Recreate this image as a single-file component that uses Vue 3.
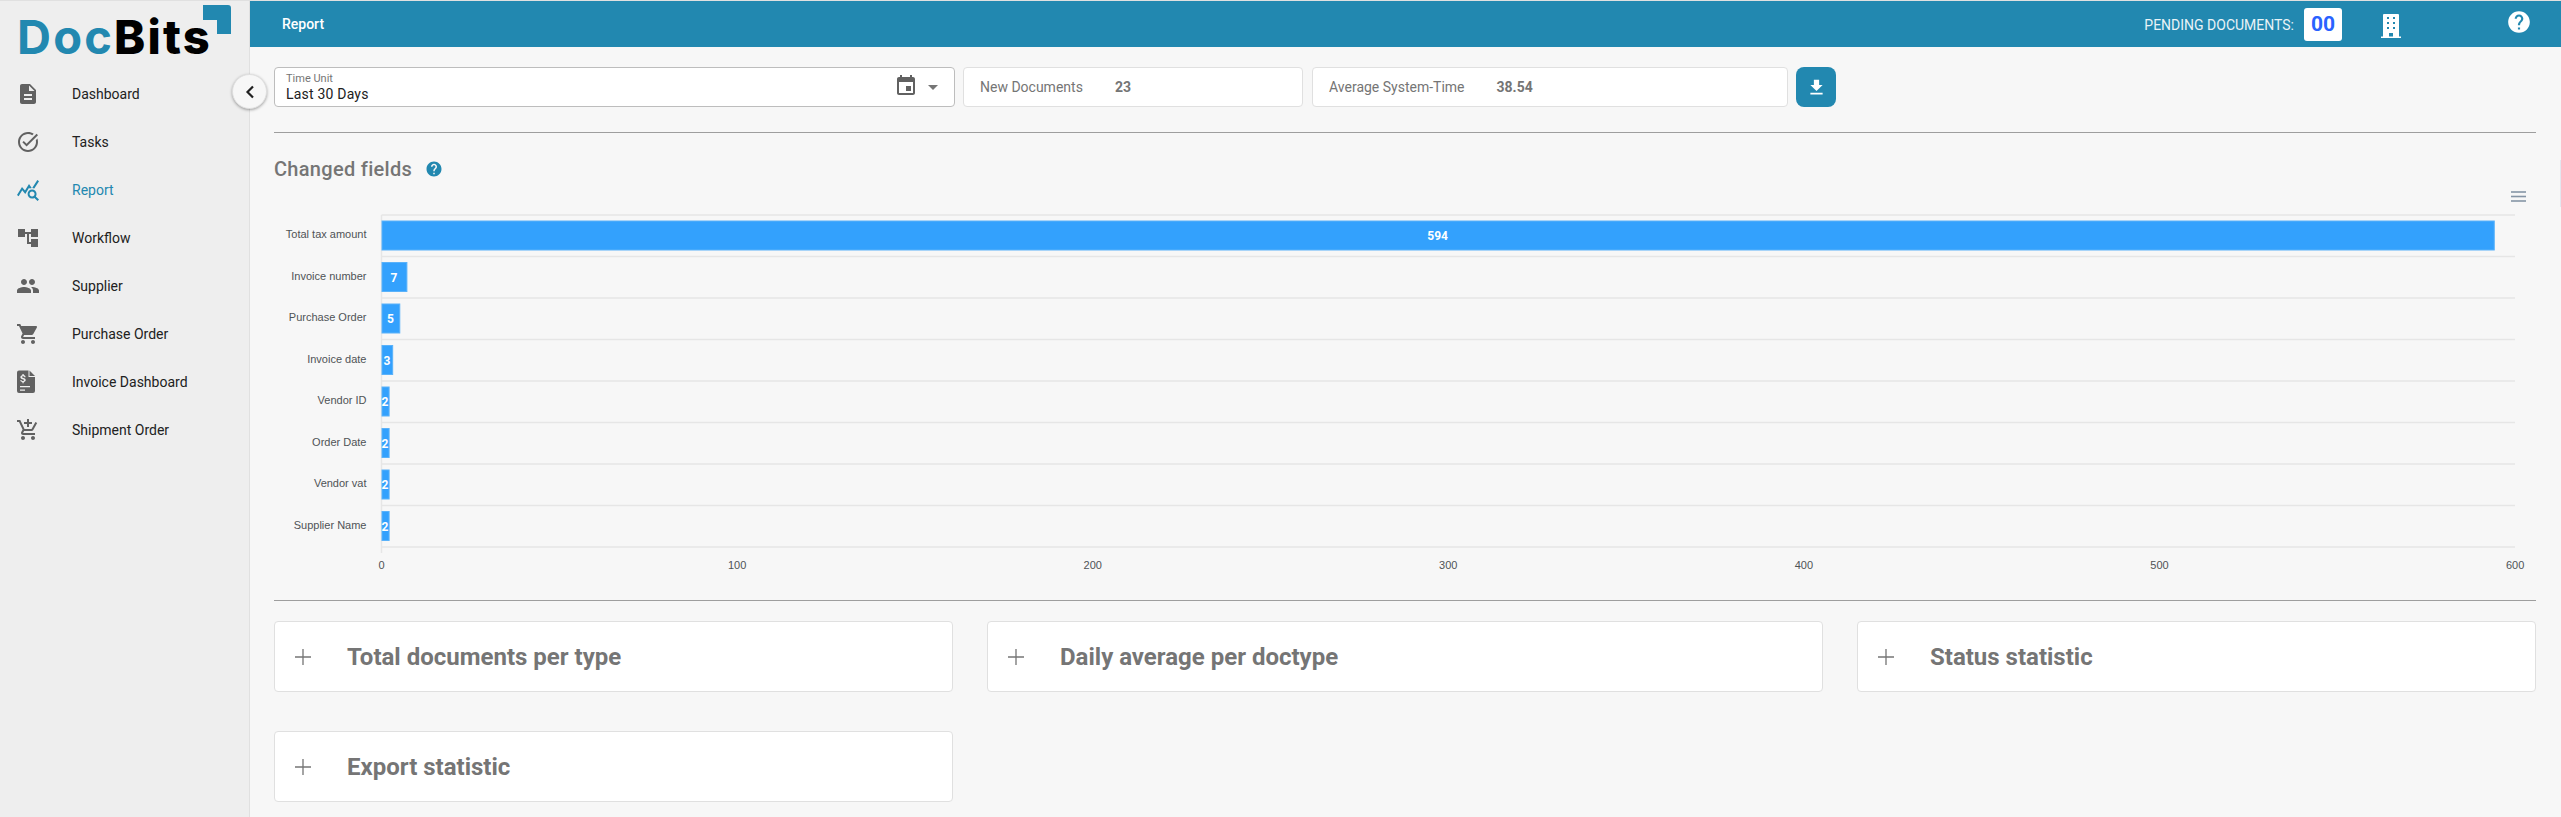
<script setup>
import { computed } from 'vue';

const navItems = [
    { label: 'Dashboard', d: 'M14 2H6c-1.1 0-1.99.9-1.99 2L4 20c0 1.1.89 2 1.99 2H18c1.1 0 2-.9 2-2V8l-6-6zm2 16H8v-2h8v2zm0-4H8v-2h8v2zm-3-5V3.5L18.5 9H13z' },
    { label: 'Tasks', d: 'M22,5.18L10.59,16.6l-4.24-4.24l1.41-1.41l2.83,2.83l10-10L22,5.18z M19.79,10.22C19.92,10.79,20,11.39,20,12c0,4.42-3.58,8-8,8s-8-3.58-8-8c0-4.42,3.58-8,8-8c1.58,0,3.04,0.46,4.28,1.25l1.44-1.44C16.1,2.67,14.13,2,12,2C6.48,2,2,6.48,2,12c0,5.52,4.48,10,10,10s10-4.48,10-10c0-1.19-0.22-2.33-0.6-3.39L19.79,10.22z' },
    { label: 'Report', active: true, d: 'M19.88,18.47c0.44-0.7,0.7-1.51,0.7-2.39c0-2.49-2.01-4.5-4.5-4.5s-4.5,2.01-4.5,4.5s2.01,4.5,4.49,4.5c0.88,0,1.7-0.26,2.39-0.7L21.58,23L23,21.58L19.88,18.47z M16.08,18.58c-1.38,0-2.5-1.12-2.5-2.5c0-1.38,1.12-2.5,2.5-2.5s2.5,1.12,2.5,2.5C18.58,17.46,17.46,18.58,16.08,18.58z M15.72,10.08c-0.74,0.02-1.45,0.18-2.1,0.45l-0.55-0.83l-3.8,6.18l-3.01-3.52l-3.63,5.81L1,17l5-8l3,3.5L13,6L15.72,10.08z M18.31,10.58c-0.64-0.28-1.33-0.45-2.05-0.49c0,0,5.11-8.09,5.11-8.09L23,3.18L18.31,10.58z' },
    { label: 'Workflow', d: 'M22 11V3h-7v3H9V3H2v8h7V8h2v10h4v3h7v-8h-7v3h-2V8h2v3z' },
    { label: 'Supplier', d: 'M16 11c1.66 0 2.99-1.34 2.99-3S17.66 5 16 5c-1.66 0-3 1.34-3 3s1.34 3 3 3zm-8 0c1.66 0 2.99-1.34 2.99-3S9.66 5 8 5C6.34 5 5 6.34 5 8s1.34 3 3 3zm0 2c-2.33 0-7 1.17-7 3.5V19h14v-2.5c0-2.33-4.67-3.5-7-3.5zm8 0c-.29 0-.62.02-.97.05 1.16.84 1.97 1.97 1.97 3.45V19h6v-2.5c0-2.33-4.67-3.5-7-3.5z' },
    { label: 'Purchase Order', d: 'M7 18c-1.1 0-1.99.9-1.99 2S5.9 22 7 22s2-.9 2-2-.9-2-2-2zM1 2v2h2l3.6 7.59-1.35 2.45c-.16.28-.25.61-.25.96 0 1.1.9 2 2 2h12v-2H7.42c-.14 0-.25-.11-.25-.25l.03-.12.9-1.63h7.45c.75 0 1.41-.41 1.75-1.03l3.58-6.49c.08-.14.12-.31.12-.48 0-.55-.45-1-1-1H5.21l-.94-2H1zm16 16c-1.1 0-1.99.9-1.99 2s.89 2 1.99 2 2-.9 2-2-.9-2-2-2z' },
    { label: 'Invoice Dashboard', d: 'M3 .5h9.500v6.500H19V21a2 2 0 0 1-2 2H3a2 2 0 0 1-2-2V2.500a2 2 0 0 1 2-2zM13.500.5l5.500 5.500h-5.500zM4 16v1.200h10V16zm0 3.500v1.200h5v-1.200zM6.400 4v1.200c-1.300.2-2 1-2 2 0 1.200 1 1.700 2.200 2 1 .3 1.500.5 1.500 1 0 .5-.6.8-1.300.8-.8 0-1.300-.3-1.400-1H4.300c.1 1.200.9 1.900 2.100 2.100v1.200h1.300v-1.200c1.300-.2 2-1 2-2 0-1.300-1-1.800-2.200-2.100-1-.3-1.500-.5-1.500-1 0-.4.5-.7 1.200-.7s1.100.3 1.200.9h1.200c-.1-1.200-.8-1.900-1.900-2.100V4z' },
    { label: 'Shipment Order', d: 'M11 9h2V6h3V4h-3V1h-2v3H8v2h3v3zm-4 9c-1.1 0-1.99.9-1.99 2S5.9 22 7 22s2-.9 2-2-.9-2-2-2zm10 0c-1.1 0-1.99.9-1.99 2s.89 2 1.99 2 2-.9 2-2-.9-2-2-2zm-9.83-3.25l.03-.12.9-1.63h7.45c.75 0 1.41-.41 1.75-1.03l3.86-7.01L19.42 4h-.01l-1.1 2-2.76 5H8.53l-.13-.27L6.16 6l-.95-2-.94-2H1v2h2l3.6 7.59-1.35 2.45c-.16.28-.25.61-.25.96 0 1.1.9 2 2 2h12v-2H7.42c-.13 0-.25-.11-.25-.25z' },
];

const helpIcon = 'M12 2C6.48 2 2 6.48 2 12s4.48 10 10 10 10-4.48 10-10S17.52 2 12 2zm1 17h-2v-2h2v2zm2.07-7.75l-.9.92C13.45 12.9 13 13.5 13 15h-2v-.5c0-1.1.45-2.1 1.17-2.83l1.24-1.26c.37-.36.59-.86.59-1.41 0-1.1-.9-2-2-2s-2 .9-2 2H8c0-2.21 1.79-4 4-4s4 1.79 4 4c0 .88-.36 1.68-.93 2.25z';

const fields = [
    { name: 'Total tax amount', value: 594 },
    { name: 'Invoice number', value: 7 },
    { name: 'Purchase Order', value: 5 },
    { name: 'Invoice date', value: 3 },
    { name: 'Vendor ID', value: 2 },
    { name: 'Order Date', value: 2 },
    { name: 'Vendor vat', value: 2 },
    { name: 'Supplier Name', value: 2 },
];

// chart geometry, relative to the svg box
const plotLeft = 107.5;
const plotTop = 34;
const rowHeight = 41.5;
const unit = 3.556;
const ticks = [0, 100, 200, 300, 400, 500, 600];

const rows = computed(() => fields.map((f, i) => {
    const width = f.value * unit;
    const rowTop = plotTop + i * rowHeight;
    return {
        ...f,
        width,
        barY: rowTop + 6,
        labelY: rowTop + 23,
        valueY: rowTop + 25,
        valueX: plotLeft + width / 2,
    };
}));

const gridLines = computed(() => fields.map((f, i) => plotTop + (i + 1) * rowHeight));

const panels = ['Total documents per type', 'Daily average per doctype', 'Status statistic', 'Export statistic'];
</script>

<template>
    <div class="app-shell">
        <aside class="sidebar">
            <div class="logo">
                <span class="logo-doc">Doc</span><span class="logo-bits">Bits</span>
                <svg class="logo-corner" width="28" height="29" viewBox="0 0 28 29">
                    <path d="M0 0h25a3 3 0 0 1 3 3v26H14V15H0z" fill="#2288b0" />
                </svg>
            </div>
            <nav class="nav">
                <div v-for="item in navItems" :key="item.label" class="nav-item" :class="{ active: item.active }">
                    <svg class="nav-icon" width="24" height="24" viewBox="0 0 24 24">
                        <path :d="item.d" fill-rule="evenodd" />
                    </svg>
                    <span>{{ item.label }}</span>
                </div>
            </nav>
            <button class="collapse-btn">
                <svg width="12" height="14" viewBox="0 0 12 14">
                    <path d="M9 1.500 3.500 7 9 12.500" fill="none" stroke="#212121" stroke-width="2.200" />
                </svg>
            </button>
        </aside>

        <main class="main">
            <header class="topbar">
                <span class="topbar-title">Report</span>
                <span class="pending-label">PENDING DOCUMENTS:</span>
                <span class="pending-count">00</span>
                <svg class="building" width="20" height="24" viewBox="0 0 20 24">
                    <path fill="#fff" fill-rule="evenodd" d="M2 1a1 1 0 0 1 1-1h14a1 1 0 0 1 1 1v21.500h2V24H0v-1.500h2zM6 3v2h2V3zm6 0v2h2V3zM6 8v2h2V8zm6 0v2h2V8zM6 13v2h2v-2zm6 0v2h2v-2zM8 19v3.500h4V19z" />
                </svg>
                <svg class="help" width="26" height="26" viewBox="0 0 24 24">
                    <path :d="helpIcon" fill="#fff" />
                </svg>
            </header>

            <div class="content">
                <section class="filters">
                    <div class="box select">
                        <div class="select-text">
                            <span class="select-label">Time Unit</span>
                            <span class="select-value">Last 30 Days</span>
                        </div>
                        <svg width="24" height="24" viewBox="0 0 24 24" class="calendar">
                            <path fill="#616161" d="M17 12h-5v5h5v-5zM16 1v2H8V1H6v2H5c-1.11 0-1.990.9-1.990 2L3 19c0 1.100.89 2 2 2h14c1.100 0 2-.9 2-2V5c0-1.100-.9-2-2-2h-1V1h-2zm3 18H5V8h14v11z" />
                        </svg>
                        <span class="caret"></span>
                    </div>
                    <div class="box stat stat-docs">
                        <span class="stat-label">New Documents</span>
                        <span class="stat-value">23</span>
                    </div>
                    <div class="box stat stat-time">
                        <span class="stat-label">Average System-Time</span>
                        <span class="stat-value">38.54</span>
                    </div>
                    <button class="download">
                        <svg width="21" height="21" viewBox="0 0 24 24">
                            <path fill="#fff" d="M19 9h-4V3H9v6H5l7 7 7-7zM5 18v2h14v-2H5z" />
                        </svg>
                    </button>
                </section>

                <hr class="divider" />

                <h2 class="chart-title">
                    Changed fields
                    <svg width="18" height="18" viewBox="0 0 24 24">
                        <path :d="helpIcon" fill="#2288b0" />
                    </svg>
                </h2>

                <svg class="chart" width="2262" height="419" viewBox="0 0 2262 419">
                    <g stroke="#8595a5" stroke-width="1.600">
                        <line x1="2237" x2="2252" y1="11" y2="11" />
                        <line x1="2237" x2="2252" y1="15.500" y2="15.500" />
                        <line x1="2237" x2="2252" y1="20" y2="20" />
                    </g>
                    <line :x1="plotLeft" :x2="2241" :y1="plotTop" :y2="plotTop" class="grid" />
                    <line v-for="y in gridLines" :key="y" :x1="plotLeft" :x2="2241" :y1="y" :y2="y" class="grid" />
                    <line :x1="plotLeft" :x2="plotLeft" :y1="plotTop" y2="372" class="grid" />

                    <g v-for="row in rows" :key="row.name">
                        <text class="y-label" x="92.500" :y="row.labelY">{{ row.name }}</text>
                        <rect class="bar" :x="plotLeft + 0.500" :y="row.barY" :width="row.width" height="29" />
                        <text class="bar-value" :x="row.valueX" :y="row.valueY">{{ row.value }}</text>
                    </g>

                    <text v-for="t in ticks" :key="t" class="x-label" :x="plotLeft + t * unit" y="388">{{ t }}</text>
                </svg>

                <hr class="divider" />

                <section class="panels">
                    <div v-for="p in panels" :key="p" class="box panel">
                        <svg width="16" height="16" viewBox="0 0 16 16">
                            <path d="M8 0v16M0 8h16" stroke="#757575" stroke-width="1.300" />
                        </svg>
                        <span class="panel-title">{{ p }}</span>
                    </div>
                </section>
            </div>
        </main>

        <span class="scroll-thumb"></span>
    </div>
</template>

<style>
html,
body {
    margin: 0;
    height: 100%;
    overflow: hidden;
    background: #f7f7f7;
}
</style>

<style scoped>
.app-shell {
    position: relative;
    display: flex;
    height: 817px;
    border-top: 1px solid #e0e0e0;
    box-sizing: border-box;
    font-family: Roboto, "Liberation Sans", sans-serif;
    background: #f7f7f7;
}

/* sliver of the chart scrollbar on the window edge */
.scroll-thumb {
    position: absolute;
    right: 0;
    top: 159px;
    width: 1px;
    height: 47px;
    background: #e3e8f0;
}

/* --- Sidebar --- */
.sidebar {
    position: relative;
    width: 250px;
    flex: none;
    box-sizing: border-box;
    background: #eeeeee;
    border-right: 1px solid #e0e0e0;
}

.logo {
    position: relative;
    height: 69px;
    box-sizing: border-box;
    padding: 8px 0 0 17px;
    font-family: Inter, sans-serif;
    font-size: 47px;
    font-weight: 700;
    line-height: 56px;
    letter-spacing: 2.2px;
}

.logo-doc {
    color: #2288b0;
}

.logo-bits {
    color: #000;
    font-weight: 800;
}

.logo-corner {
    position: absolute;
    left: 203px;
    top: 4px;
}

.nav-item {
    display: flex;
    align-items: center;
    gap: 32px;
    height: 48px;
    padding-left: 16px;
    font-size: 14px;
    color: #212121;
}

.nav-icon {
    fill: #616161;
    flex: none;
}

.nav-item.active {
    color: #2288b0;
}

.nav-item.active .nav-icon {
    fill: #2288b0;
}

.collapse-btn {
    position: absolute;
    left: 232px;
    top: 73px;
    width: 35px;
    height: 35px;
    padding: 0;
    display: flex;
    align-items: center;
    justify-content: center;
    border: 1px solid #e0e0e0;
    border-radius: 50%;
    background: #f7f7f7;
    box-shadow: 0 1px 3px rgba(0, 0, 0, 0.35);
    z-index: 2;
}

/* --- Top bar --- */
.main {
    flex: 1;
    min-width: 0;
}

.topbar {
    display: flex;
    align-items: center;
    height: 46px;
    padding-left: 32px;
    background: #2288b0;
    color: #fff;
}

.topbar-title {
    font-size: 14px;
    font-weight: 500;
    margin-right: auto;
}

.pending-label {
    font-size: 14px;
    color: #e9f3f7;
    margin-top: 1px;
}

.pending-count {
    width: 38px;
    height: 33px;
    margin: 0 39px 0 10px;
    border-radius: 3px;
    background: #fff;
    color: #2962ff;
    font-size: 21px;
    font-weight: 700;
    line-height: 32px;
    text-align: center;
}

.building {
    margin-top: 3px;
}

.help {
    margin: -4px 29px 0 105px;
}

/* --- Filters --- */
.content {
    padding: 20px 25px 0 24px;
}

.box {
    box-sizing: border-box;
    background: #fff;
    border: 1px solid #e0e0e0;
    border-radius: 4px;
}

.filters {
    display: flex;
    gap: 9px;
    height: 40px;
}

.select {
    display: flex;
    align-items: center;
    width: 681px;
    margin-right: -1px;
    padding: 0 16px 0 11px;
    border-color: #bdbdbd;
}

.select-text {
    flex: 1;
    display: flex;
    flex-direction: column;
    margin-top: 1px;
}

.select-label {
    font-size: 11px;
    line-height: 14px;
    color: #757575;
}

.select-value {
    font-size: 14px;
    line-height: 17px;
    letter-spacing: 0.2px;
    color: #212121;
}

.calendar {
    margin-right: 10px;
    margin-top: -3px;
}

.caret {
    width: 0;
    height: 0;
    border-left: 5px solid transparent;
    border-right: 5px solid transparent;
    border-top: 5px solid #757575;
}

.stat {
    display: flex;
    align-items: center;
    gap: 32px;
    padding-left: 16px;
    font-size: 14px;
    color: #757575;
}

.stat-docs {
    width: 340px;
}

.stat-time {
    width: 476px;
}

.stat-value {
    font-weight: 700;
}

.download {
    width: 40px;
    height: 40px;
    margin-left: -1px;
    padding: 0;
    display: flex;
    align-items: center;
    justify-content: center;
    border: none;
    border-radius: 8px;
    background: #2288b0;
}

.divider {
    height: 1px;
    margin: 25px 0 0;
    border: none;
    background: #9e9e9e;
}

/* --- Chart --- */
.chart-title {
    display: flex;
    align-items: center;
    gap: 13px;
    height: 24px;
    margin: 24px 0 0;
    font-size: 20px;
    font-weight: 500;
    letter-spacing: 0.3px;
    color: #757575;
}

.chart {
    display: block;
}

.chart + .divider {
    margin-top: 0;
}

.grid {
    stroke: #e6e6e6;
    stroke-width: 1.500;
}

.y-label,
.x-label {
    font-family: "Liberation Sans", Arial, sans-serif;
    font-size: 11px;
    fill: #4f5356;
}

.y-label {
    text-anchor: end;
}

.x-label {
    text-anchor: middle;
}

.bar {
    fill: #33a1fd;
    stroke: #5ab2fa;
    stroke-width: 1;
}

.bar-value {
    font-family: Roboto, sans-serif;
    font-size: 12px;
    font-weight: 700;
    fill: #fff;
    text-anchor: middle;
}

/* --- Collapsed panels --- */
.panels {
    display: grid;
    grid-template-columns: 679px 836px 1fr;
    gap: 39px 34px;
    margin-top: 20px;
}

.panel {
    display: flex;
    align-items: center;
    gap: 36px;
    height: 71px;
    padding-left: 20px;
}

.panel-title {
    font-size: 24px;
    font-weight: 700;
    color: #757575;
}
</style>
